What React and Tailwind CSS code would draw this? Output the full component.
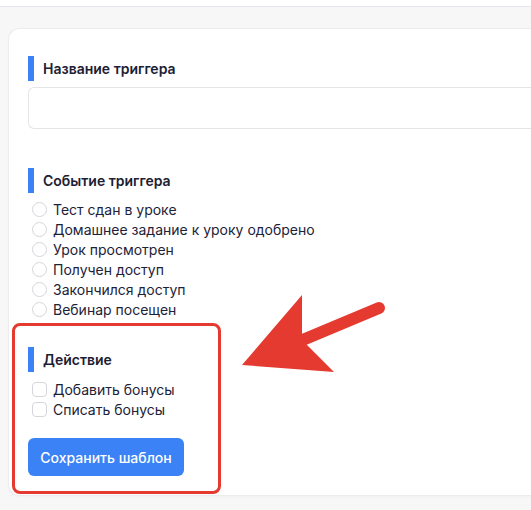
const events = [
  "Тест сдан в уроке",
  "Домашнее задание к уроку одобрено",
  "Урок просмотрен",
  "Получен доступ",
  "Закончился доступ",
  "Вебинар посещен",
];

const actions = ["Добавить бонусы", "Списать бонусы"];

function SectionTitle({ children }) {
  return (
    <div className="flex items-center h-[25px]">
      <div className="w-[6px] h-[25px] bg-[#3b82f6]" />
      <span className="ml-[9px] text-[14px] font-semibold text-[#1c2033]">{children}</span>
    </div>
  );
}

export default function App() {
  return (
    <div
      className="relative w-[531px] h-[510px] overflow-hidden bg-[#f7f7f8]"
      style={{ fontFamily: "Inter, 'Noto Sans', sans-serif" }}
    >
      {/* top bar */}
      <div className="h-[7px] bg-white border-b border-[#e6e8f0]" />

      <div className="pl-[8px] pt-[21px]">
        <div className="bg-white rounded-l-[12px] border border-r-0 border-[#ececee] pl-[19px] pt-[27px] pb-[19px] shadow-[0_1px_3px_rgba(0,0,0,0.03)]">
          <SectionTitle>Название триггера</SectionTitle>
          <div className="mt-[6px] h-[42px] rounded-l-[6px] border border-r-0 border-[#e5e5e7]" />

          <div className="mt-[39px]">
            <SectionTitle>Событие триггера</SectionTitle>
          </div>
          <div className="mt-[6px] flex flex-col">
            {events.map((e) => (
              <label key={e} className="flex items-center h-[20px] pl-[4px]">
                <span className="w-[15px] h-[15px] rounded-full border border-[#d4d6da] bg-white" />
                <span className="ml-[6px] text-[14px] text-[#1c2238]">{e}</span>
              </label>
            ))}
          </div>

          <div className="mt-[28px]">
            <SectionTitle>Действие</SectionTitle>
          </div>
          <div className="mt-[7px] flex flex-col">
            {actions.map((a) => (
              <label key={a} className="flex items-center h-[20px] pl-[4px]">
                <span className="w-[15px] h-[15px] rounded-[4px] border border-[#d4d6da] bg-white" />
                <span className="ml-[6px] text-[14px] text-[#1c2238]">{a}</span>
              </label>
            ))}
          </div>

          <button className="mt-[19px] w-[156px] h-[38px] rounded-[6px] bg-[#3b82f6] text-white text-[14px] font-medium">
            Сохранить шаблон
          </button>
        </div>
      </div>

      {/* annotation box */}
      <div className="absolute left-[12px] top-[323px] w-[209px] h-[171px] border-[3px] border-[#e53a30] rounded-[8px]" />

      {/* annotation arrow */}
      <svg className="absolute left-0 top-0" width="531" height="510" viewBox="0 0 531 510">
        <line x1="305" y1="339" x2="379" y2="308" stroke="#e53a30" strokeWidth="12" strokeLinecap="round" />
        <polygon points="242,365 302,295 302,333 307,345 334,372" fill="#e53a30" />
      </svg>
    </div>
  );
}
